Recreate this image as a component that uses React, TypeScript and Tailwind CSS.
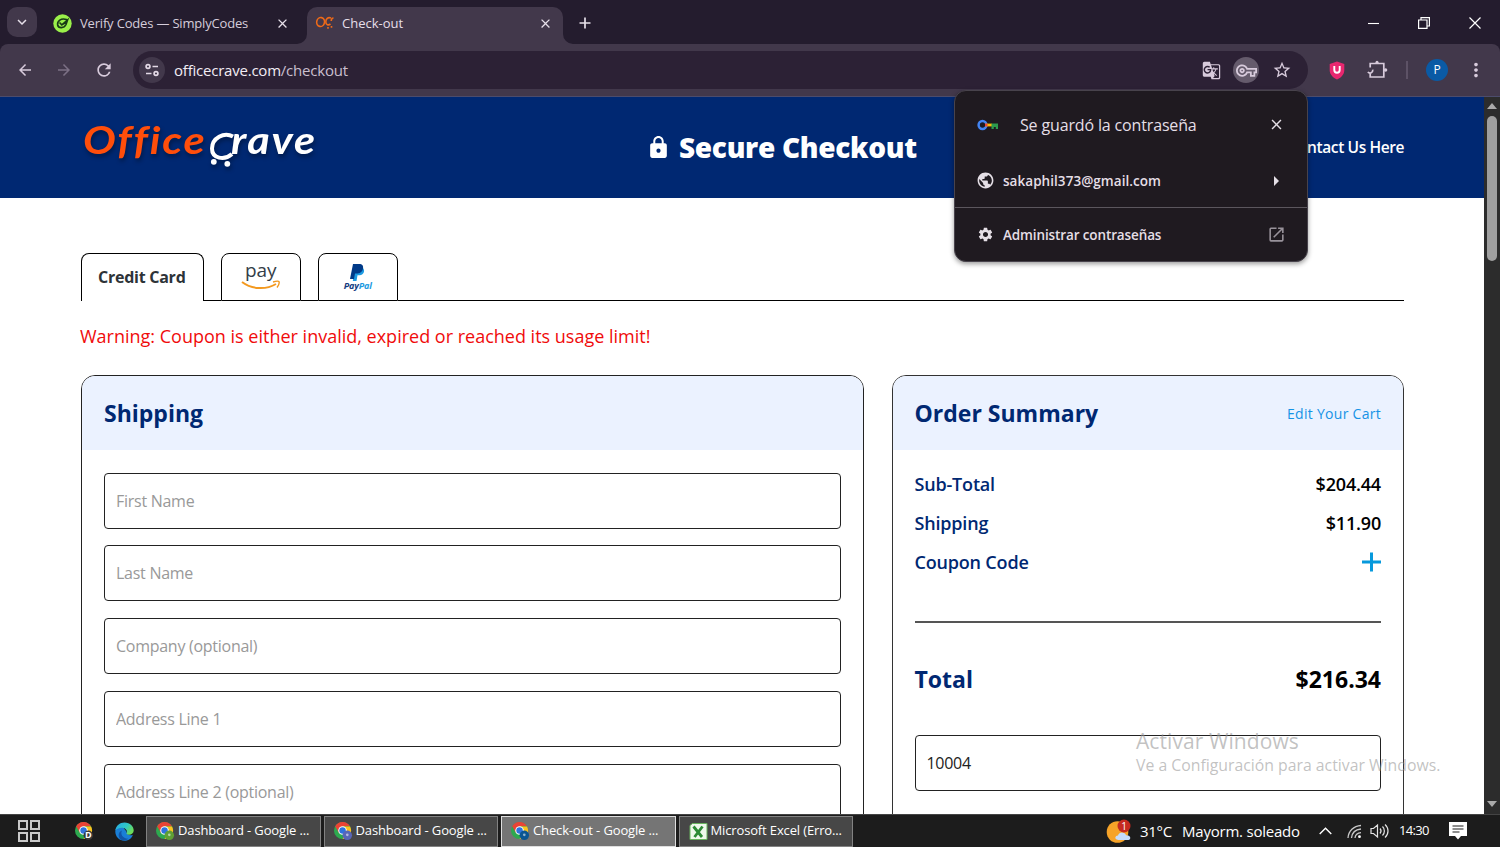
import React from "react";
import {
  MdArrowBack,
  MdArrowForward,
  MdArrowRight,
  MdClose,
  MdGTranslate,
  MdKeyboardArrowDown,
  MdLock,
  MdMoreVert,
  MdOpenInNew,
  MdOutlineVpnKey,
  MdPublic,
  MdRefresh,
  MdSettings,
  MdStarBorder,
} from "react-icons/md";

const fields = [
  "First Name",
  "Last Name",
  "Company (optional)",
  "Address Line 1",
  "Address Line 2 (optional)",
];

const ChromeIcon: React.FC<{ badge: string; label?: string }> = ({ badge, label }) => (
  <svg className="h-[19px] w-[19px] shrink-0" viewBox="0 0 20 20">
    <circle cx="9" cy="9" r="9" fill="#2da94f" />
    <path d="M9 9 L1.2 4.5 A9 9 0 0 1 16.8 4.5 L9 4.5 Z" fill="#ea4335" />
    <path d="M9 4.7 H16.9 A9 9 0 0 1 9 18 L12.8 10.5 Z" fill="#fcc31e" />
    <path d="M1.2 4.5 L5.3 11.5 L9 9 L9 4.7 Z" fill="#ea4335" />
    <circle cx="9" cy="9" r="4.5" fill="#fff" />
    <circle cx="9" cy="9" r="3.4" fill="#2f73de" />
    <circle cx="14" cy="14" r="5" fill={badge} />
    {label ? (
      <text x="14" y="17.2" textAnchor="middle" fontSize="9.5" fontWeight="700" fontFamily="Open Sans, sans-serif" fill="#fff">
        {label}
      </text>
    ) : (
      <circle cx="14" cy="13.5" r="1.4" fill="#fff" fillOpacity="0.55" />
    )}
  </svg>
);

const EdgeIcon: React.FC = () => (
  <svg className="h-[19px] w-[19px]" viewBox="0 0 20 20">
    <defs>
      <linearGradient id="edgeTop" x1="0" y1="0" x2="1" y2="0.5">
        <stop offset="0" stopColor="#27a9e8" />
        <stop offset="0.6" stopColor="#2fc8c6" />
        <stop offset="1" stopColor="#6bdc5a" />
      </linearGradient>
    </defs>
    <path d="M0.3 10 C0.3 5 5 3 9 6 L12 10 C12 13 15 15 18.8 13.6 C17 18 13.5 19.7 10 19.7 C4.5 19.7 0.3 15.4 0.3 10 Z" fill="#1a7fd6" />
    <path d="M0.4 9 C1 3.5 5 0.4 10 0.4 C16 0.4 19.7 4.5 19.7 9 C19.7 12 17 13.6 14.4 13.4 C12.6 13.3 11.7 12.5 12.2 11.7 C13.5 9.5 11.5 6 7.5 6 C4 6 1.2 7.5 0.4 9 Z" fill="url(#edgeTop)" />
    <path d="M7.4 9 C5.3 12 7.6 17.6 14 17.6 C11 20 6 19.8 4.5 16.5 C3 13 4.5 9.8 7.4 9 Z" fill="#1256a8" />
  </svg>
);

const TaskButton: React.FC<{ title: string; icon: React.ReactNode; active?: boolean }> = ({ title, icon, active }) => (
  <div
    className={`flex h-[31px] w-[174.5px] items-center gap-[3px] border pl-[9px] text-[13px] tracking-[-0.14px] whitespace-nowrap text-white ${
      active ? "border-[#dedede] bg-[#757575]" : "border-[#828282] bg-[#474747]"
    }`}
  >
    {icon}
    <span>{title}</span>
  </div>
);

const BrowserTabs: React.FC = () => (
  <div className="flex h-[44px] shrink-0 items-end bg-[#241c2e] text-[#e6dfe9]">
    <div className="mb-[7px] ml-[7px] flex h-[30px] w-[30px] items-center justify-center rounded-[10px] bg-[#42384b]">
      <MdKeyboardArrowDown size={18} />
    </div>
    <div className="flex h-[44px] w-[270px] items-center pt-[2px] pl-[16px]">
      <svg className="h-[19px] w-[19px]" viewBox="0 0 19 19">
        <circle cx="9.5" cy="9.5" r="9.2" fill="#9af04a" />
        <path d="M13.5 5.5 C8 3.8 4 7 4.7 11 C5.4 14.5 11 14.6 13 10.5 L14.5 6 L8.8 10.8 L7 9 M8.8 10.8 L12 9" fill="none" stroke="#173a16" strokeWidth="1.7" strokeLinecap="round" />
      </svg>
      <span className="ml-[8px] w-[190px] pt-[2px] text-[13px] tracking-[-0.18px] whitespace-nowrap text-[#d6cddb]">
        Verify Codes — SimplyCodes
      </span>
      <MdClose size={15} className="ml-[5px]" />
    </div>
    <div className="relative flex h-[37px] w-[256px] items-center rounded-t-[10px] bg-[#42384b] pr-[10px] pb-[5px] pl-[8px]">
      <svg className="absolute bottom-0 -left-[10px] h-[10px] w-[10px]" viewBox="0 0 10 10">
        <path d="M10 0 V10 H0 A10 10 0 0 0 10 0" fill="#42384b" />
      </svg>
      <svg className="absolute -right-[10px] bottom-0 h-[10px] w-[10px]" viewBox="0 0 10 10">
        <path d="M0 0 V10 H10 A10 10 0 0 1 0 0" fill="#42384b" />
      </svg>
      <svg className="h-[16px] w-[20px]" viewBox="0 0 20 16" fill="none" stroke="#ee6a18" strokeWidth="1.6">
        <ellipse cx="5.6" cy="7" rx="3.9" ry="4.5" transform="rotate(12 5.6 7)" />
        <path d="M18.5 3 C17 3 16.3 4 16.2 6 M16 3 C13 1.6 10.8 4 10.8 7 C10.8 10 13.4 10.6 15.5 9 M13 12 v1.8 M16.5 11 v1.8" />
      </svg>
      <span className="ml-[7px] flex-1 pt-[2px] text-[13px] tracking-[0px]">Check-out</span>
      <MdClose size={15} />
    </div>
    <div className="flex h-[44px] flex-1 items-center pt-[2px] pr-[18px] pl-[14px]">
      <svg className="h-[16px] w-[16px]" viewBox="0 0 16 16" stroke="#e6dfe9" strokeWidth="1.7">
        <path d="M2.5 8 H13.5 M8 2.5 V13.5" />
      </svg>
      <div className="ml-auto flex items-center gap-[37px]">
        <svg className="h-[14px] w-[14px]" viewBox="0 0 14 14" stroke="#fff" strokeWidth="1.1">
          <path d="M2 7.5 H13" />
        </svg>
        <svg className="h-[14px] w-[14px]" viewBox="0 0 14 14" fill="none" stroke="#fff" strokeWidth="1.2">
          <path d="M1.6 4 H10 V12.4 H1.6 Z M4 4 V1.6 H12.4 V10 H10" />
        </svg>
        <svg className="h-[14px] w-[14px]" viewBox="0 0 14 14" stroke="#fff" strokeWidth="1.2">
          <path d="M1.5 1.5 L12.5 12.5 M12.5 1.5 L1.5 12.5" />
        </svg>
      </div>
    </div>
  </div>
);

const Toolbar: React.FC = () => (
  <div className="shrink-0 bg-[#241c2e]">
    <div className="flex h-[53px] items-center rounded-t-[8px] border-b border-[#4c4c6c] bg-[#42384b] text-[#d8cbdc]">
      <div className="flex w-[133px] items-center gap-[21px] pl-[16px]">
        <MdArrowBack size={18} />
        <MdArrowForward size={18} className="text-[#7c7085]" />
        <MdRefresh size={20} />
      </div>
      <div className="flex h-[38px] w-[1175px] items-center rounded-full bg-[#2c2135] pr-[16px] pl-[6px]">
        <div className="flex h-[26px] w-[26px] items-center justify-center rounded-full bg-[#42384b]">
          <svg className="h-[14px] w-[16px]" viewBox="0 0 16 14" fill="none" stroke="#e3d9e6" strokeWidth="1.7">
            <circle cx="4" cy="3.5" r="1.9" />
            <path d="M8.5 3.5 H14 M2 10.5 H7.5" />
            <circle cx="12" cy="10.5" r="1.9" />
          </svg>
        </div>
        <span className="ml-[9px] flex-1 text-[15px] tracking-[-0.22px] text-[#f2ecf4]">
          officecrave.com<span className="text-[#cabfce]">/checkout</span>
        </span>
        <MdGTranslate size={19} />
        <div className="ml-[12px] flex h-[26px] w-[26px] items-center justify-center rounded-full bg-[#655b6c]">
          <MdOutlineVpnKey size={21} />
        </div>
        <MdStarBorder size={20} className="ml-[13px]" />
      </div>
      <svg className="ml-[21px] h-[19px] w-[16px]" viewBox="0 0 16 19">
        <path d="M8 0.5 L15.3 3 V9 C15.3 13.5 12 16.8 8 18.5 C4 16.8 0.7 13.5 0.7 9 V3 Z" fill="#e8276f" />
        <path d="M5.3 5 V9 A2.7 2.7 0 0 0 10.7 9 V5" fill="none" stroke="#fff" strokeWidth="1.9" />
      </svg>
      {/* Extensions */}
      <svg className="ml-[22px] h-[20px] w-[21px]" viewBox="0 0 21 20" fill="none" stroke="#d8cbdc" strokeWidth="1.7">
        <path d="M3.2 7.5 V3.5 H16.8 V17 H3.2 V13.2" />
        <path d="M0.8 12 C3 14.3 6 12.6 5.8 9.6" />
        <circle cx="10" cy="2.2" r="1.5" fill="#d8cbdc" stroke="none" />
        <circle cx="18.6" cy="10" r="1.7" fill="#d8cbdc" stroke="none" />
      </svg>
      <div className="ml-[18px] h-[18px] w-[2px] bg-[#5d5266]" />
      <div className="ml-[18px] flex h-[22px] w-[22px] items-center justify-center rounded-full bg-[#0a5aa5] text-[12px] text-white">
        P
      </div>
      <MdMoreVert size={22} className="ml-[17px]" />
    </div>
  </div>
);

const Logo: React.FC = () => (
  <svg className="h-[66px] w-[244px] shrink-0 drop-shadow-[1px_3px_2px_rgba(0,0,0,0.35)]" viewBox="0 -4 244 66">
    <g
      className="[font-variant-ligatures:none]"
      fontFamily="Lato, sans-serif"
      fontStyle="italic"
      fontWeight="700"
      fontSize="38.5"
      letterSpacing="1.6"
    >
      <text x="1" y="34.5" fill="#ff4e0b" textLength="123.5" lengthAdjust="spacingAndGlyphs">
        Office
      </text>
      <text x="149" y="34.5" fill="#fff" textLength="86" lengthAdjust="spacingAndGlyphs">
        rave
      </text>
    </g>
    <path d="M151 17.5 C142 12.5 130 19 130 29.5 C130 39.5 142 42 150 35" fill="none" stroke="#fff" strokeWidth="4" />
    <circle cx="131.8" cy="42.8" r="2.9" fill="#fff" />
    <circle cx="145.3" cy="44.8" r="2.9" fill="#fff" />
  </svg>
);

const SiteHeader: React.FC = () => (
  <header className="flex h-[101px] shrink-0 items-center bg-[#002872] pr-[80px] pl-[82px] text-white">
    <Logo />
    <div className="ml-[320px] flex items-center gap-[8px]">
      <MdLock size={25} />
      <h1 className="pb-[2px] text-[28px] leading-none font-extrabold tracking-[-0.3px] whitespace-nowrap">Secure Checkout</h1>
    </div>
    <span className="ml-auto text-[15.5px] font-semibold tracking-[-0.4px]">Contact Us Here</span>
  </header>
);

const PaymentTabs: React.FC = () => (
  <div className="flex h-[48px] items-stretch">
    <div className="flex w-[122.5px] items-center justify-center rounded-t-[8px] border border-b-0 border-black pr-px pb-[2px] text-[16px] font-bold tracking-[-0.25px] text-[#2d3338]">
      Credit Card
    </div>
    <div className="w-[17.5px] border-b border-black" />
    <div className="flex w-[79.5px] flex-col items-center rounded-t-[8px] border border-black pt-[5px]">
      <span className="text-[19px] leading-[22px] text-[#333e48]">pay</span>
      <svg className="-mt-[1px] h-[11px] w-[40px]" viewBox="0 0 40 11" fill="none" stroke="#f3991f">
        <path d="M1 2 C11 9.5 25 10 35 4" strokeWidth="2" />
        <path d="M32 2 C35 1 37.5 0.8 38 1.7 C38.5 3 37.5 5.5 36 7.5" strokeWidth="1.4" />
      </svg>
    </div>
    <div className="w-[17.5px] border-b border-black" />
    <div className="flex w-[79.5px] flex-col items-center rounded-t-[8px] border border-black pt-[10px]">
      <svg className="h-[17px] w-[15px]" viewBox="0 0 15 17">
        <path d="M5 4 H13 C15 6 14.5 11 9.5 11.2 H7.5 L6.5 17 H2.8 Z" fill="#1d9be2" />
        <path d="M3 0 H9 C12.5 0 13.6 2 13 4.8 C12.2 8.4 9.5 9.6 6.5 9.6 H5 L4 15 H0 Z" fill="#003a88" />
      </svg>
      <span className="text-[9px] leading-[10px] font-bold tracking-[-0.2px] text-[#143b80] italic">
        Pay<span className="text-[#1d9be2]">Pal</span>
      </span>
    </div>
    <div className="flex-1 border-b border-black" />
  </div>
);

const ShippingCard: React.FC = () => (
  <section className="h-[520px] w-[783px] overflow-hidden rounded-t-[14px] border border-[#222]">
    <div className="flex h-[74px] items-center bg-[#ebf2ff] px-[22px]">
      <h2 className="text-[23px] font-bold text-[#002872]">Shipping</h2>
    </div>
    <div className="flex flex-col gap-[16.8px] px-[22px] pt-[22.6px]">
      {fields.map((field) => (
        <input
          key={field}
          placeholder={field}
          className="h-[56px] w-full shrink-0 rounded-[4px] border border-[#222] px-[11px] text-[16px] tracking-[-0.27px] placeholder:text-[#999]"
        />
      ))}
    </div>
  </section>
);

const OrderSummary: React.FC = () => (
  <section className="h-[520px] w-[512.5px] overflow-hidden rounded-t-[14px] border border-[#333]">
    <div className="flex h-[74px] items-center justify-between bg-[#ebf2ff] px-[22px]">
      <h2 className="text-[23px] font-bold text-[#002872]">Order Summary</h2>
      <a className="text-[14px] tracking-[0.28px] text-[#1593e6]">Edit Your Cart</a>
    </div>
    <div className="px-[22px] pt-[15.5px] text-[18px] font-semibold tracking-[-0.18px] text-[#002872]">
      <div className="flex h-[38.8px] items-center justify-between">
        <span>Sub-Total</span>
        <span className="text-black">$204.44</span>
      </div>
      <div className="flex h-[38.8px] items-center justify-between">
        <span>Shipping</span>
        <span className="text-black">$11.90</span>
      </div>
      <div className="flex h-[38.8px] items-center justify-between">
        <span>Coupon Code</span>
        <svg className="h-[20px] w-[20px]" viewBox="0 0 20 20" stroke="#0799dc" strokeWidth="3">
          <path d="M1 10 H20 M10.5 0.5 V19.5" />
        </svg>
      </div>
      <div className="mt-[39px] border-t-2 border-[#555]" />
      <div className="mt-[36px] flex h-[40px] items-center justify-between text-[23px] font-bold tracking-normal">
        <span>Total</span>
        <span className="text-black">$216.34</span>
      </div>
      <input
        defaultValue="10004"
        className="mt-[36px] h-[56px] w-full rounded-[4px] border border-[#222] px-[11px] text-[16px] font-normal tracking-[-0.3px] text-[#222]"
      />
    </div>
  </section>
);

const PasswordBubble: React.FC = () => (
  <div className="absolute top-[90px] left-[954px] h-[172px] w-[354px] rounded-[12px] border border-[#48434c] bg-[#1f1a20] text-[#e5dfe6] shadow-[0_2px_5px_rgba(0,0,0,0.4)]">
    <div className="flex h-[67px] items-center pr-[22px] pl-[22px]">
      <svg className="h-[12px] w-[22px]" viewBox="0 0 22 12">
        <circle cx="5.5" cy="6" r="3.9" fill="none" stroke="#4385f4" strokeWidth="2.5" />
        <path d="M8.5 4.6 H15 V7.4 H8.5 Z" fill="#fbbc04" />
        <path d="M8 4.6 H10.5 V7.4 H8 Z" fill="#ea4335" />
        <path d="M14.5 4.6 H21 V10 H18.8 V8 H16.8 V10 H14.5 Z" fill="#2d9a4c" />
      </svg>
      <span className="ml-[21px] flex-1 text-[16px] tracking-[-0.15px]">Se guardó la contraseña</span>
      <MdClose size={17} />
    </div>
    <div className="flex h-[50px] items-center border-b border-[#5b565d] pr-[19px] pb-[4px] pl-[21px]">
      <MdPublic size={19} />
      <span className="ml-[8px] flex-1 pt-[2px] text-[13.5px] font-semibold tracking-[0.05px]">sakaphil373@gmail.com</span>
      <MdArrowRight size={24} />
    </div>
    <div className="flex h-[53px] items-center pr-[21px] pl-[22px]">
      <MdSettings size={17} />
      <span className="ml-[9px] flex-1 pt-px text-[13.5px] font-semibold tracking-[-0.12px]">Administrar contraseñas</span>
      <MdOpenInNew size={19} className="text-[#98929a]" />
    </div>
  </div>
);

const PageScrollbar: React.FC = () => (
  <div className="flex w-[16px] shrink-0 flex-col items-center bg-[#2c2c2c]">
    <svg className="mt-[6px] h-[6px] w-[10px]" viewBox="0 0 10 6">
      <path d="M0 6 L5 0 L10 6 Z" fill="#aaa" />
    </svg>
    <div className="mt-[7px] h-[145px] w-[10px] rounded-full bg-[#9f9f9f]" />
    <svg className="mt-auto mb-[7px] h-[6px] w-[10px]" viewBox="0 0 10 6">
      <path d="M0 0 L5 6 L10 0 Z" fill="#aaa" />
    </svg>
  </div>
);

const Taskbar: React.FC = () => (
  <div className="flex h-[33px] shrink-0 items-center border-t border-[#444] bg-[#1c1c1c] pr-[33px] pl-[18px] text-white">
    <svg className="h-[22px] w-[22px]" viewBox="0 0 22 22" fill="none" stroke="#c9c9c9" strokeWidth="2">
      <path d="M1 1 H9 V9 H1 Z M13 1 H21 V9 H13 Z M1 13 H9 V21 H1 Z M13 13 H21 V21 H13 Z" />
    </svg>
    <div className="ml-[34.5px] flex w-[71.5px] items-center gap-[21px]">
      <ChromeIcon badge="#383838" label="D" />
      <EdgeIcon />
    </div>
    <div className="flex gap-[3px]">
      <TaskButton title="Dashboard - Google ..." icon={<ChromeIcon badge="#5f9f35" />} />
      <TaskButton title="Dashboard - Google ..." icon={<ChromeIcon badge="#5866b8" />} />
      <TaskButton active title="Check-out - Google ..." icon={<ChromeIcon badge="#0b5592" />} />
      <TaskButton
        title="Microsoft Excel (Erro..."
        icon={
          <svg className="h-[17px] w-[19px] shrink-0" viewBox="0 0 18 17">
            <path d="M0.5 2.5 L3 0.5 H17.5 V16.5 H0.5 Z" fill="#eff8ec" stroke="#68b35e" />
            <path d="M4 3.5 L12.5 14 M13 3.5 L5 14" stroke="#2d8a35" strokeWidth="2.8" />
          </svg>
        }
      />
    </div>
    <svg className="ml-auto h-[25px] w-[26px]" viewBox="0 0 26 25">
      <circle cx="11.5" cy="13" r="10.8" fill="#f6a328" />
      <path d="M11 20.5 C8.5 20 9 16.5 12 16.5 C13 12.5 19 12.5 20 16.3 C25.5 16 25 21 22.5 21 H12 Z" fill="#c5dcfb" />
      <circle cx="18" cy="7" r="6.5" fill="#c62a20" />
      <text x="18" y="10.5" textAnchor="middle" fontSize="10" fontFamily="Open Sans, sans-serif" fill="#fff">
        1
      </text>
    </svg>
    <span className="ml-[8px] w-[42px] text-[15px] tracking-[-0.3px] whitespace-nowrap">31°C</span>
    <span className="w-[118px] text-[15px] tracking-[-0.22px] whitespace-nowrap">Mayorm. soleado</span>
    <svg className="ml-[19px] h-[8px] w-[13px]" viewBox="0 0 13 8" fill="none" stroke="#fff" strokeWidth="1.4">
      <path d="M0.7 7 L6.5 1.2 L12.3 7" />
    </svg>
    <svg className="ml-[15px] h-[15px] w-[15px]" viewBox="0 0 15 15" fill="none" stroke="#c9c9c9" strokeWidth="1.3">
      <path d="M1 14 C1.5 7 6.5 2 14 1.5 M4.5 14 C5 9 8.5 5.5 14 5 M8 14 C8.3 11 10.5 9 14 8.7" />
      <circle cx="12.5" cy="12.7" r="1.4" fill="#fff" stroke="none" />
    </svg>
    <svg className="ml-[8px] h-[16px] w-[19px]" viewBox="0 0 19 16" fill="none" stroke="#e4e4e4" strokeWidth="1.2">
      <path d="M1 5.5 H3.5 L7.5 2 V14 L3.5 10.5 H1 Z M10 5.5 C11.3 7 11.3 9 10 10.5 M12.5 3.5 C15 6 15 10 12.5 12.5 M15 1.5 C19 5 19 11 15 14.5" />
    </svg>
    <span className="ml-[10px] w-[31px] text-[13px] tracking-[-0.7px] whitespace-nowrap">14:30</span>
    <svg className="ml-[19px] h-[18px] w-[18px]" viewBox="0 0 18 18">
      <path d="M0 0 H18 V14 H12 L9 17.5 L6 14 H0 Z" fill="#fff" />
      <path d="M3.5 4 H14.5 M3.5 7 H14.5 M3.5 10 H10.5" stroke="#1c1c1c" strokeWidth="1.1" />
    </svg>
  </div>
);

const App: React.FC = () => {
  return (
    <div className="relative flex h-[847px] w-[1500px] flex-col overflow-hidden bg-white font-['Open_Sans',sans-serif]">
      <BrowserTabs />
      <Toolbar />
      <div className="flex min-h-0 flex-1">
        <div className="flex min-w-0 flex-1 flex-col overflow-hidden">
          <SiteHeader />
          <main className="w-[1404px] pt-[55px] pl-[81px]">
            <PaymentTabs />
            <p className="mt-[21px] -ml-px text-[18px] leading-[28px] whitespace-nowrap text-[#f00b0b]">
              Warning: Coupon is either invalid, expired or reached its usage limit!
            </p>
            <div className="mt-[25px] flex justify-between">
              <ShippingCard />
              <OrderSummary />
            </div>
          </main>
        </div>
        <PageScrollbar />
      </div>
      <Taskbar />

      <PasswordBubble />

      {/* Windows activation watermark */}
      <div className="pointer-events-none absolute top-[727px] left-[1136px] whitespace-nowrap text-[#999]/60">
        <div className="text-[21px] leading-[28px] tracking-[0.08px]">Activar Windows</div>
        <div className="text-[15.8px] leading-[21px]">Ve a Configuración para activar Windows.</div>
      </div>
    </div>
  );
};

export default App;
